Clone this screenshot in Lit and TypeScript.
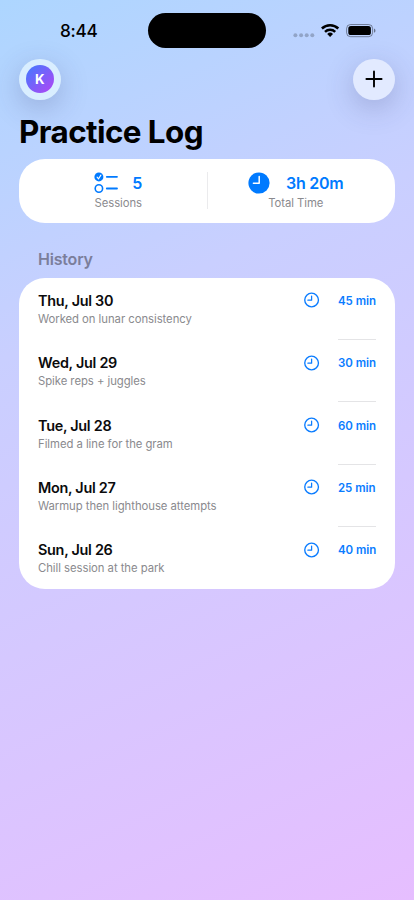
import { LitElement, html, css, svg } from "lit";
import { customElement, property } from "lit/decorators.js";

interface Session {
  day: string;
  note: string;
  minutes: number;
}

const SESSIONS: Session[] = [
  { day: "Thu, Jul 30", note: "Worked on lunar consistency", minutes: 45 },
  { day: "Wed, Jul 29", note: "Spike reps + juggles", minutes: 30 },
  { day: "Tue, Jul 28", note: "Filmed a line for the gram", minutes: 60 },
  { day: "Mon, Jul 27", note: "Warmup then lighthouse attempts", minutes: 25 },
  { day: "Sun, Jul 26", note: "Chill session at the park", minutes: 40 },
];

@customElement("status-bar")
class StatusBar extends LitElement {
  static styles = css`
    :host {
      display: grid;
      grid-template-columns: 148px 118px 148px;
      height: 48px;
      padding-top: 13px;
      box-sizing: border-box;
    }
    .time {
      padding-left: 60px;
      font-size: 17.2px;
      line-height: 36px;
      font-weight: 550;
      letter-spacing: -0.25px;
    }
    .island {
      height: 35px;
      border-radius: 18px;
      background: #000;
    }
    .signals {
      padding-left: 27px;
    }
    svg {
      display: block;
    }
  `;
  render() {
    return html`
      <div class="time">8:44</div>
      <div class="island"></div>
      <div class="signals">
        <svg width="90" height="35" viewBox="293 13 90 35">
          <g fill="#000" fill-opacity=".22">
            ${[295.4, 301.1, 306.7, 312.3].map((x) => svg`<circle cx=${x} cy="35.3" r="2"/>`)}
          </g>
          <g fill="none" stroke="#000" stroke-width="2.5">
            <path d="M321.9 28.5a11.9 11.9 0 0 1 16.4 0"/>
            <path d="M325 31.9a7.4 7.4 0 0 1 10.2 0"/>
          </g>
          <path d="M327.2 34a4.2 4.2 0 0 1 5.8 0l-2.9 2.9z"/>
          <rect x="346.6" y="24.5" width="26" height="12.2" rx="4" fill="none" stroke="#000" stroke-opacity=".4"/>
          <rect x="348.3" y="26.1" width="22.6" height="9" rx="2.6"/>
          <path d="M374 28.6v4.1q1.5-.6 1.5-2.05t-1.5-2.05z" fill-opacity=".45"/>
        </svg>
      </div>
    `;
  }
}

@customElement("session-row")
class SessionRow extends LitElement {
  @property({ attribute: false }) session!: Session;
  @property({ type: Boolean, reflect: true }) last = false;

  static styles = css`
    :host {
      display: grid;
      grid-template-columns: 1fr 34px 38px;
      height: 62.4px;
      padding: 13.2px 19px 0;
      box-sizing: border-box;
    }
    .day {
      font-size: 14.4px;
      line-height: 19px;
      font-weight: 600;
      letter-spacing: -0.28px;
      color: #0b0b0c;
    }
    .note {
      font-size: 11.3px;
      line-height: 18.4px;
      letter-spacing: -0.04px;
      color: #8a8a8e;
    }
    svg {
      display: block;
      margin-top: 1.4px;
    }
    .side {
      display: flex;
      flex-direction: column;
      justify-content: space-between;
      border-bottom: 1px solid #e4e4e6;
    }
    :host([last]) .side {
      border-color: transparent;
    }
    .minutes {
      font-size: 11.5px;
      line-height: 20px;
      font-weight: 600;
      letter-spacing: -0.05px;
      white-space: nowrap;
      color: #0a7cff;
    }
  `;
  render() {
    return html`
      <div>
        <div class="day">${this.session.day}</div>
        <div class="note">${this.session.note}</div>
      </div>
      <svg width="16" height="16" viewBox="0 0 16 16" fill="none" stroke="#0a7cff" stroke-linecap="round" stroke-linejoin="round">
        <circle cx="7.6" cy="8" r="6.85" stroke-width="1.35"/>
        <path d="M7.6 4v4.2H3.9" stroke-width="1.25"/>
      </svg>
      <div class="side"><div class="minutes">${this.session.minutes} min</div></div>
    `;
  }
}

@customElement("app-root")
class AppRoot extends LitElement {
  static styles = css`
    :host {
      display: block;
      height: 900px;
      overflow: hidden;
      font-family: Inter, sans-serif;
      color: #000;
      background: linear-gradient(155.3deg, #add6ff 0%, #c9cfff 33%, #e6beff 100%);
    }
    .toolbar {
      display: flex;
      justify-content: space-between;
      padding: 10.6px 19px 0;
    }
    .round {
      display: grid;
      place-items: center;
      width: 41.6px;
      height: 41.6px;
      border-radius: 50%;
      background: #e2eaff;
      box-shadow: 0 8px 28px rgba(60, 60, 110, 0.25);
    }
    .profile {
      background: #d9eeff;
    }
    .avatar {
      width: 28px;
      height: 28px;
      border-radius: 50%;
      background: linear-gradient(135deg, #3f7bff, #b444f4);
      color: #fff;
      font-size: 13.3px;
      line-height: 28px;
      font-weight: 700;
      text-align: center;
    }
    h1 {
      margin: 12px 19px 6px;
      font-size: 31.4px;
      line-height: 40.4px;
      font-weight: 700;
      letter-spacing: -0.57px;
    }
    .card {
      margin: 0 19px;
      background: #fff;
      border-radius: 26px;
    }
    .summary {
      display: grid;
      grid-template-columns: 1fr 1px 1fr;
      gap: 8px;
      height: 64.2px;
      padding: 0 19px;
      box-sizing: border-box;
      align-items: center;
    }
    .rule {
      height: 37px;
      background: #ebebed;
    }
    .stat {
      display: flex;
      flex-direction: column;
      align-items: center;
    }
    .figure {
      display: flex;
      align-items: center;
      height: 24px;
      font-size: 16px;
      font-weight: 600;
      letter-spacing: -0.28px;
      color: #007aff;
    }
    .checks {
      margin-right: 14px;
    }
    .clock {
      margin-right: 16px;
    }
    .label {
      font-size: 11.3px;
      line-height: 16px;
      color: #8a8a8e;
      letter-spacing: -0.06px;
    }
    h2 {
      margin: 24.8px 38px 8px;
      font-size: 16px;
      line-height: 22px;
      font-weight: 600;
      letter-spacing: -0.2px;
      color: #7b7e9b;
    }
    .history {
      height: 311.6px;
    }
  `;
  render() {
    return html`
      <status-bar></status-bar>
      <div class="toolbar">
        <div class="round profile"><div class="avatar">K</div></div>
        <div class="round">
          <svg width="18" height="18" viewBox="0 0 18 18" stroke="#000" stroke-width="1.9" stroke-linecap="round">
            <path d="M9 1.4v15.2M1.4 9h15.2"/>
          </svg>
        </div>
      </div>
      <h1>Practice Log</h1>
      <div class="card summary">
        <div class="stat">
          <div class="figure">
            <svg class="checks" width="24" height="22" viewBox="0 0 24 22" fill="none" stroke="#007aff" stroke-width="1.8" stroke-linecap="round">
              <circle cx="4.9" cy="4.9" r="4.5" fill="#007aff" stroke="none"/>
              <path d="M3.1 5.2l1.4 1.6 2.4-3.7" stroke="#fff" stroke-width="1.1"/>
              <circle cx="4.9" cy="16.5" r="3.7" stroke-width="1.6"/>
              <path d="M12.8 4.8h10.2M12.8 16.5h10.2"/>
            </svg>
            <span>5</span>
          </div>
          <div class="label">Sessions</div>
        </div>
        <div class="rule"></div>
        <div class="stat">
          <div class="figure">
            <svg class="clock" width="22" height="22" viewBox="0 0 22 22" fill="none">
              <circle cx="11" cy="11" r="10.6" fill="#007aff"/>
              <path d="M11.2 4.6v6.7H5.4" stroke="#fff" stroke-width="1.5" stroke-linecap="round" stroke-linejoin="round"/>
            </svg>
            <span>3h 20m</span>
          </div>
          <div class="label">Total Time</div>
        </div>
      </div>
      <h2>History</h2>
      <div class="card history">
        ${SESSIONS.map(
          (s, i) => html`<session-row .session=${s} ?last=${i === SESSIONS.length - 1}></session-row>`
        )}
      </div>
    `;
  }
}
